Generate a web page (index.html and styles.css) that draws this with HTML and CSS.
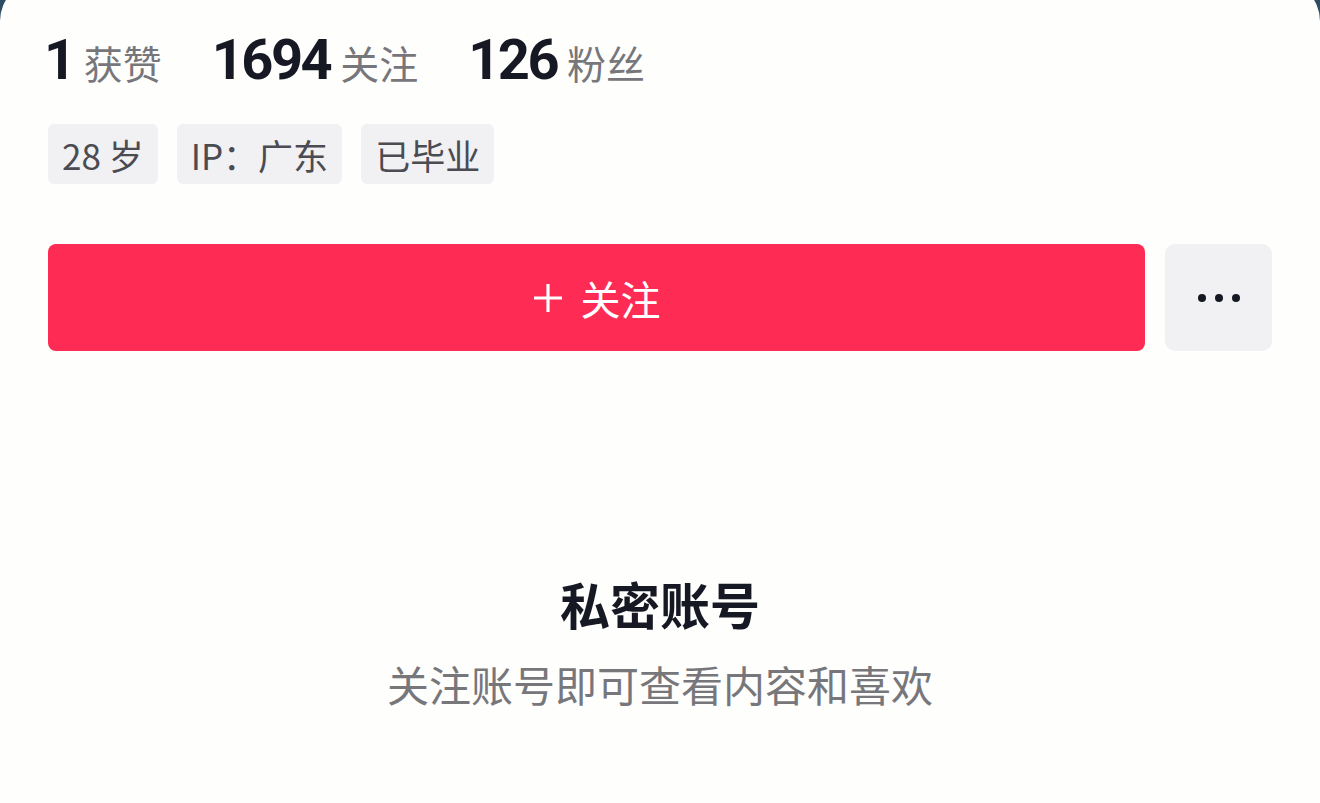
FILE: index.html
```html
<!DOCTYPE html>
<html lang="zh-CN">
<head>
    <meta charset="UTF-8">
    <meta name="viewport" content="width=device-width, initial-scale=1.0">
    <title>私密账号</title>
    <link rel="stylesheet" href="styles.css">
</head>
<body>

    <div class="card">
        <!-- 数据 -->
        <div class="stats">
            <div class="stat"><span class="num">1</span><span class="label">获赞</span></div>
            <div class="stat"><span class="num">1694</span><span class="label">关注</span></div>
            <div class="stat"><span class="num">126</span><span class="label">粉丝</span></div>
        </div>

        <!-- 标签 -->
        <div class="tags">
            <span class="tag">28 岁</span>
            <span class="tag">IP：广东</span>
            <span class="tag">已毕业</span>
        </div>

        <!-- 按钮 -->
        <div class="actions">
            <button class="btn-follow">
                <svg class="plus" width="30" height="30" viewBox="0 0 30 30">
                    <path d="M15 1v28M1 15h28" stroke="#fff" stroke-width="3.2" fill="none"/>
                </svg>
                关注
            </button>
            <button class="btn-more">
                <span class="dot"></span><span class="dot"></span><span class="dot"></span>
            </button>
        </div>

        <!-- 私密提示 -->
        <div class="private">
            <h2>私密账号</h2>
            <p>关注账号即可查看内容和喜欢</p>
        </div>
    </div>

</body>
</html>
```

FILE: styles.css
```css
body {
    margin: 0;
    padding: 0;
    background: linear-gradient(180deg, #2e4d63, #5b7d90);
    font-family: "Noto Sans CJK SC", "Noto Sans", sans-serif;
    overflow: hidden;
}

.card {
    margin-top: -19px;
    padding: 19px 48px 0 48px;
    height: 803px;
    background-color: #fefefd;
    border-radius: 40px 40px 0 0;
}

.stats {
    display: flex;
    align-items: baseline;
    gap: 50px;
    padding-top: 30px;
    height: 62px;
    margin-left: -4px;
}

.stat {
    display: flex;
    align-items: baseline;
    gap: 10px;
}

.num {
    font-family: Roboto, "Liberation Sans", sans-serif;
    font-weight: 700;
    font-size: 56px;
    letter-spacing: -2.5px;
    color: #161823;
    line-height: 60px;
}

.label {
    font-size: 39px;
    color: #77777b;
    line-height: 60px;
}

.tags {
    display: flex;
    gap: 19px;
    margin-top: 32px;
}

.tag {
    display: flex;
    align-items: center;
    height: 60px;
    padding: 0 14px;
    background-color: #f1f1f3;
    border-radius: 6px;
    font-size: 35px;
    color: #4b4b52;
}

.actions {
    display: flex;
    gap: 20px;
    margin-top: 60px;
}

.btn-follow {
    flex: 1;
    height: 107px;
    border: none;
    border-radius: 8px;
    background-color: #fe2c55;
    color: #fff;
    font-family: "Noto Sans CJK SC", sans-serif;
    font-size: 40px;
    display: flex;
    align-items: center;
    justify-content: center;
}

.plus {
    margin-right: 18px;
}

.btn-more {
    width: 107px;
    height: 107px;
    border: none;
    border-radius: 10px;
    background-color: #f1f1f3;
    display: flex;
    align-items: center;
    justify-content: center;
    gap: 9px;
}

.dot {
    width: 8px;
    height: 8px;
    border-radius: 50%;
    background-color: #161823;
}

.private {
    text-align: center;
    margin-top: 222px;
}

.private h2 {
    margin: 0;
    font-size: 50px;
    font-weight: 700;
    color: #161823;
    line-height: 60px;
}

.private p {
    margin: 26px 0 0 0;
    font-size: 42px;
    color: #77777b;
    line-height: 50px;
}
```
